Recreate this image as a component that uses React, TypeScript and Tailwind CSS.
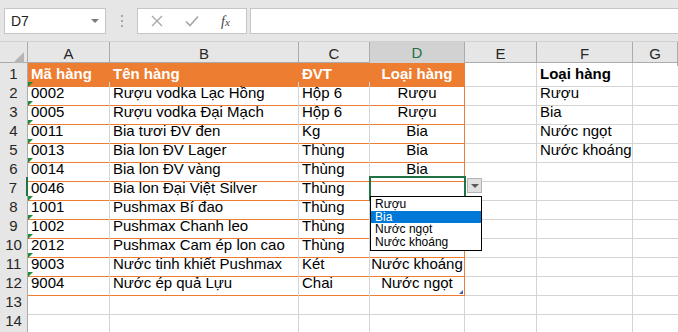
import React from "react";

type Row = [string, string, string, string];

const rows: Row[] = [
  ["0002", "Rượu vodka Lạc Hồng", "Hộp 6", "Rượu"],
  ["0005", "Rượu vodka Đại Mạch", "Hộp 6", "Rượu"],
  ["0011", "Bia tươi ĐV đen", "Kg", "Bia"],
  ["0013", "Bia lon ĐV Lager", "Thùng", "Bia"],
  ["0014", "Bia lon ĐV vàng", "Thùng", "Bia"],
  ["0046", "Bia lon Đại Việt Silver", "Thùng", ""],
  ["1001", "Pushmax Bí đao", "Thùng", ""],
  ["1002", "Pushmax Chanh leo", "Thùng", ""],
  ["2012", "Pushmax Cam ép lon cao", "Thùng", ""],
  ["9003", "Nước tinh khiết Pushmax", "Két", "Nước khoáng"],
  ["9004", "Nước ép quả Lựu", "Chai", "Nước ngọt"],
];

const lookup = ["Loại hàng", "Rượu", "Bia", "Nước ngọt", "Nước khoáng"];
const options = ["Rượu", "Bia", "Nước ngọt", "Nước khoáng"];
const letters = ["A", "B", "C", "D", "E", "F", "G"];

const gridCols = "grid grid-cols-[28px_82px_189px_71px_95px_72px_96px_1fr]";

function ErrorMark() {
  return (
    <span className="absolute left-0 top-0 h-0 w-0 border-t-[5px] border-r-[5px] border-t-[#1e8c3a] border-r-transparent" />
  );
}

function FormulaBar() {
  return (
    <div className="flex h-[41px] items-start bg-[#e6e6e6] pl-[4px] pt-[8px]">
      <div className="relative flex h-[26px] w-[102px] items-center border border-[#c6c6c6] bg-white pl-[6px] text-[14px] text-[#222]">
        D7
        <span className="absolute right-[6px] top-[10px] h-0 w-0 border-l-[4px] border-r-[4px] border-t-[4px] border-l-transparent border-r-transparent border-t-[#7a7a7a]" />
      </div>
      <div className="flex h-[26px] w-[31px] flex-col items-center justify-center gap-[3px]">
        <span className="h-[2px] w-[2px] bg-[#a8a8a8]" />
        <span className="h-[2px] w-[2px] bg-[#a8a8a8]" />
        <span className="h-[2px] w-[2px] bg-[#a8a8a8]" />
      </div>
      <div className="flex h-[26px] w-[110px] items-center border border-[#c6c6c6] bg-white">
        <svg width="12" height="12" viewBox="0 0 12 12" className="ml-[13px]">
          <path d="M1 1L11 11M11 1L1 11" stroke="#a6a6a6" strokeWidth="1.3" fill="none" />
        </svg>
        <svg width="14" height="12" viewBox="0 0 14 12" className="ml-[22px]">
          <path d="M1 6.5L5 10.5L13 1.5" stroke="#a6a6a6" strokeWidth="1.6" fill="none" />
        </svg>
        <span className="ml-[22px] font-['Liberation_Serif'] text-[14px] italic text-[#444]">
          f<span className="text-[11px]">x</span>
        </span>
      </div>
      <div className="ml-[3px] h-[26px] flex-1 border border-r-0 border-[#c6c6c6] bg-white" />
    </div>
  );
}

function HeaderRow() {
  return (
    <div className={`${gridCols} h-[22px] border-y border-t-[#d0d0d0] border-b-[#ababab] bg-[#e6e6e6] text-[15px] text-[#262626]`}>
      <div className="relative border-r border-[#ababab]">
        <span className="absolute bottom-[3px] right-[3px] h-0 w-0 border-b-[11px] border-l-[11px] border-b-[#b5b5b5] border-l-transparent" />
      </div>
      {letters.map((l) =>
        l === "D" ? (
          <div
            key={l}
            className="-mb-[1px] flex items-center justify-center border-b-2 border-r border-b-[#217346] border-r-[#ababab] bg-[#d2d2d2] text-[#217346]"
          >
            {l}
          </div>
        ) : (
          <div key={l} className="flex items-center justify-center border-r border-[#ababab]">
            {l}
          </div>
        )
      )}
    </div>
  );
}

function RowHead({ n }: { n: number }) {
  const sel = n === 7;
  return (
    <div
      className={`flex items-center justify-center border-b border-b-[#d4d4d4] bg-[#e6e6e6] text-[15px] text-[#262626] ${
        sel ? "border-r-2 border-r-[#217346]" : "border-r border-r-[#ababab]"
      }`}
    >
      {n < 15 ? n : ""}
    </div>
  );
}

function TitleRow() {
  return (
    <div className={`${gridCols} h-[19px] text-[15px]`}>
      <RowHead n={1} />
      {["Mã hàng", "Tên hàng", "ĐVT"].map((t) => (
        <div key={t} className="flex items-center border-b border-r border-[#ed7d31] bg-[#ed7d31] pl-[3px] font-bold text-white">
          {t}
        </div>
      ))}
      <div className="flex items-center justify-center border-b border-r border-[#ed7d31] bg-[#ed7d31] font-bold text-white">
        Loại hàng
      </div>
      <div className="border-b border-r border-[#d4d4d4]" />
      <div className="flex items-center border-b border-r border-[#d4d4d4] pl-[3px] font-bold text-black">
        {lookup[0]}
      </div>
      <div className="border-b border-[#d4d4d4]" />
    </div>
  );
}

function ValidationList() {
  return (
    <div className="absolute left-[0px] top-[19px] z-20 w-[112px] border border-black bg-white py-[1px] font-['Liberation_Sans'] text-[12px] leading-[12.7px] text-black">
      {options.map((o) => (
        <div key={o} className={`pl-[4px] ${o === "Bia" ? "bg-[#0078d7] text-white" : ""}`}>
          {o}
        </div>
      ))}
    </div>
  );
}

function DataRow({ r, n }: { r: Row; n: number }) {
  const active = n === 7;
  const last = n === 12;
  const side = lookup[n - 1];
  return (
    <div className={`${gridCols} h-[19px] text-[15px] text-black`}>
      <RowHead n={n} />
      <div className="relative flex items-center border-b border-r border-b-[#ed7d31] border-r-[#d4d4d4] pl-[3px]">
        {!active && <ErrorMark />}
        {r[0]}
      </div>
      <div className="flex items-center whitespace-nowrap border-b border-r border-b-[#ed7d31] border-r-[#d4d4d4] pl-[3px]">
        {r[1]}
      </div>
      <div className="flex items-center border-b border-r border-b-[#ed7d31] border-r-[#d4d4d4] pl-[3px]">
        {r[2]}
      </div>
      <div className="relative flex items-center justify-center whitespace-nowrap border-b border-r border-[#ed7d31]">
        {r[3]}
        {active && (
          <>
            <span className="absolute -left-[1px] -right-[2px] -top-[1px] -bottom-[1px] z-10 border-2 border-[#217346]" />
            <span className="absolute -bottom-[3px] -right-[4px] z-10 h-[5px] w-[5px] border border-white bg-[#217346]" />
            <span className="absolute -right-[18px] top-[1px] z-20 flex h-[15px] w-[15px] items-center justify-center border border-[#b4b4b4] bg-[#e1e1e1]">
              <span className="h-0 w-0 border-l-[4px] border-r-[4px] border-t-[4px] border-l-transparent border-r-transparent border-t-[#5a5a5a]" />
            </span>
            <ValidationList />
          </>
        )}
        {last && (
          <span className="absolute bottom-[1px] right-[1px] h-0 w-0 border-b-[4px] border-l-[4px] border-b-[#3f5fb0] border-l-transparent" />
        )}
      </div>
      <div className="border-b border-r border-[#d4d4d4]" />
      <div className="flex items-center border-b border-r border-[#d4d4d4] pl-[3px]">{side ?? ""}</div>
      <div className="border-b border-[#d4d4d4]" />
    </div>
  );
}

function EmptyRow({ n }: { n: number }) {
  return (
    <div className={`${gridCols} h-[19px] text-[15px]`}>
      <RowHead n={n} />
      {letters.map((l) => (
        <div key={l} className={`border-b border-[#d4d4d4] ${l === "G" ? "" : "border-r"}`} />
      ))}
    </div>
  );
}

export default function App() {
  return (
    <div className="h-[332px] w-[678px] overflow-hidden bg-white font-['Liberation_Sans',Arial,sans-serif]">
      <FormulaBar />
      <HeaderRow />
      <TitleRow />
      {rows.map((r, i) => (
        <DataRow key={i} r={r} n={i + 2} />
      ))}
      <EmptyRow n={13} />
      <EmptyRow n={14} />
      <EmptyRow n={15} />
    </div>
  );
}
